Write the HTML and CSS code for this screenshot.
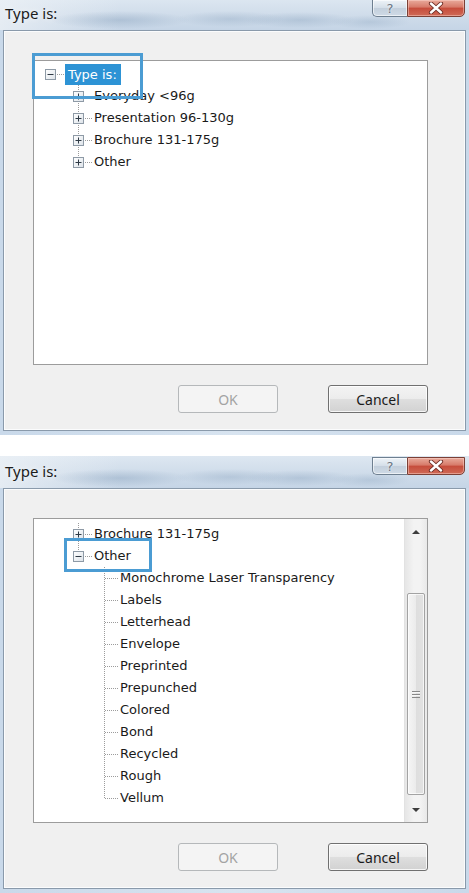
FILE: index.html
```html
<!DOCTYPE html>
<html lang="en">
<head>
<meta charset="utf-8">
<title>Type is:</title>
<link rel="stylesheet" href="styles.css">
</head>
<body>
<svg width="0" height="0" class="defs" aria-hidden="true">
  <defs>
    <linearGradient id="boxfill" x1="0" y1="0" x2="1" y2="1">
      <stop offset="0" stop-color="#ffffff"/>
      <stop offset="1" stop-color="#dde3e9"/>
    </linearGradient>
    <symbol id="minus" viewBox="0 0 11 11">
      <rect x=".5" y=".5" width="10" height="10" fill="url(#boxfill)" stroke="#8e9aa6"/>
      <path d="M2.5 5.5H8.5" stroke="#2f3a45"/>
    </symbol>
    <symbol id="plus" viewBox="0 0 11 11">
      <rect x=".5" y=".5" width="10" height="10" fill="url(#boxfill)" stroke="#8e9aa6"/>
      <path d="M2.5 5.5H8.5M5.5 2.5V8.5" stroke="#2f3a45"/>
    </symbol>
    <symbol id="closex" viewBox="0 0 16 12">
      <path d="M3 1.5 L13 10.5 M13 1.5 L3 10.5" stroke="#6a2a22" stroke-width="4.2" stroke-linecap="round"/>
      <path d="M3 1.5 L13 10.5 M13 1.5 L3 10.5" stroke="#ffffff" stroke-width="2.4" stroke-linecap="round"/>
    </symbol>
  </defs>
</svg>

<div class="window first">
  <div class="titlebar">
    <span class="title">Type is:</span>
    <div class="caption">
      <span class="cap help">?</span>
      <span class="cap close"><svg width="16" height="12"><use href="#closex"/></svg></span>
    </div>
  </div>
  <div class="client">
    <div class="tree">
      <div class="tree-content pad-a">
        <ul class="grp g0">
          <li>
            <div class="row r0"><span class="exp"><svg width="11" height="11"><use href="#minus"/></svg></span><span class="label sel">Type is:</span></div>
            <ul class="grp g1">
              <li><div class="row r1"><span class="exp"><svg width="11" height="11"><use href="#plus"/></svg></span><span class="label">Everyday &lt;96g</span></div></li>
              <li><div class="row r1"><span class="exp"><svg width="11" height="11"><use href="#plus"/></svg></span><span class="label">Presentation 96-130g</span></div></li>
              <li><div class="row r1"><span class="exp"><svg width="11" height="11"><use href="#plus"/></svg></span><span class="label">Brochure 131-175g</span></div></li>
              <li><div class="row r1"><span class="exp"><svg width="11" height="11"><use href="#plus"/></svg></span><span class="label">Other</span></div></li>
            </ul>
          </li>
        </ul>
      </div>
    </div>
    <div class="actions">
      <button class="btn" disabled>OK</button>
      <button class="btn">Cancel</button>
    </div>
    <div class="callout callout-a"></div>
  </div>
</div>

<div class="window second">
  <div class="titlebar">
    <span class="title">Type is:</span>
    <div class="caption">
      <span class="cap help">?</span>
      <span class="cap close"><svg width="16" height="12"><use href="#closex"/></svg></span>
    </div>
  </div>
  <div class="client">
    <div class="tree">
      <div class="tree-content pad-b">
        <ul class="grp g1">
          <li><div class="row r1"><span class="exp"><svg width="11" height="11"><use href="#plus"/></svg></span><span class="label">Brochure 131-175g</span></div></li>
          <li>
            <div class="row r1"><span class="exp"><svg width="11" height="11"><use href="#minus"/></svg></span><span class="label">Other</span></div>
            <ul class="grp g2">
              <li><div class="row r2"><span class="exp"></span><span class="label">Monochrome Laser Transparency</span></div></li>
              <li><div class="row r2"><span class="exp"></span><span class="label">Labels</span></div></li>
              <li><div class="row r2"><span class="exp"></span><span class="label">Letterhead</span></div></li>
              <li><div class="row r2"><span class="exp"></span><span class="label">Envelope</span></div></li>
              <li><div class="row r2"><span class="exp"></span><span class="label">Preprinted</span></div></li>
              <li><div class="row r2"><span class="exp"></span><span class="label">Prepunched</span></div></li>
              <li><div class="row r2"><span class="exp"></span><span class="label">Colored</span></div></li>
              <li><div class="row r2"><span class="exp"></span><span class="label">Bond</span></div></li>
              <li><div class="row r2"><span class="exp"></span><span class="label">Recycled</span></div></li>
              <li><div class="row r2"><span class="exp"></span><span class="label">Rough</span></div></li>
              <li><div class="row r2"><span class="exp"></span><span class="label">Vellum</span></div></li>
            </ul>
          </li>
        </ul>
      </div>
      <div class="scrollbar">
        <div class="sb-btn"><span class="arrow up"></span></div>
        <div class="sb-track"><div class="thumb"><span class="grip"></span></div></div>
        <div class="sb-btn"><span class="arrow down"></span></div>
      </div>
    </div>
    <div class="actions">
      <button class="btn" disabled>OK</button>
      <button class="btn">Cancel</button>
    </div>
    <div class="callout callout-b"></div>
  </div>
</div>
</body>
</html>
```

FILE: styles.css
```css
* { box-sizing: border-box; }

html, body {
  margin: 0;
  padding: 0;
  background: #ffffff;
  overflow: hidden;
}

body {
  width: 469px;
  height: 893px;
  font-family: "DejaVu Sans", sans-serif;
}

.defs { position: absolute; width: 0; height: 0; }

.window {
  width: 469px;
  padding: 0 3px 4px 3px;
  background: linear-gradient(to right, #c9d9ea, #d8e4f0 50%, #c9d9ea);
}

.window.first { margin-top: -2px; }
.window.second { margin-top: 21px; }

.titlebar {
  height: 32px;
  margin: 0 -3px;
  padding: 0 4px 0 5px;
  display: flex;
  align-items: flex-start;
  justify-content: space-between;
  background:
    radial-gradient(ellipse 70px 9px at 120px 22px, rgba(120,148,178,.35), transparent),
    radial-gradient(ellipse 55px 8px at 230px 21px, rgba(120,148,178,.28), transparent),
    radial-gradient(ellipse 55px 8px at 300px 22px, rgba(120,148,178,.3), transparent),
    radial-gradient(ellipse 40px 7px at 370px 24px, rgba(120,148,178,.25), transparent),
    linear-gradient(to right, rgba(236,241,246,.8), rgba(236,241,246,0) 120px),
    linear-gradient(#dde7f1, #cfdcea 55%, #c5d5e6);
}

.title {
  font-family: "Noto Sans", sans-serif;
  font-size: 15px;
  color: #1c1c1c;
  line-height: 20px;
  margin-top: 5px;
  text-shadow: 0 0 6px rgba(255,255,255,.9);
}

.caption {
  display: flex;
  margin-top: 1px;
}

.cap {
  height: 18px;
  display: flex;
  align-items: center;
  justify-content: center;
  border: 1px solid #6e7f90;
}

.cap.help {
  width: 35px;
  border-right: none;
  border-radius: 0 0 0 5px;
  background: linear-gradient(#eef3f8, #d4dee8 50%, #c3cfdc 51%, #cfdae6);
  font-family: "DejaVu Sans", sans-serif;
  font-size: 13px;
  color: #6a7582;
  text-shadow: 0 0 2px #fff;
  box-shadow: inset 0 0 0 1px rgba(255,255,255,.6);
}

.cap.close {
  width: 58px;
  border-color: #7b4036;
  border-radius: 0 0 5px 0;
  background: linear-gradient(#e9aa9b, #d77a69 45%, #c64c3b 50%, #cf6a57);
  box-shadow: inset 0 0 0 1px rgba(255,220,210,.45);
}

.client {
  position: relative;
  height: 401px;
  padding: 29px 0 0 29px;
  background: #f0f0f0;
  border: 1px solid #8a9aab;
  box-shadow: inset 0 0 0 1px #fbfcfd;
}

.tree {
  width: 395px;
  height: 305px;
  background: #ffffff;
  border: 1px solid #9c9c9c;
  display: flex;
  overflow: hidden;
}

.tree-content {
  flex: 1;
  overflow: hidden;
}

.pad-a { padding-top: 2px; }
.pad-b { padding-top: 4px; }

.grp {
  list-style: none;
  margin: 0;
  padding: 0;
}

.g1 > li {
  background: repeating-linear-gradient(to bottom, #9c9c9c 0 1px, transparent 1px 2px) no-repeat 44px 0 / 1px 100%;
}
.g1 > li:last-child { background-size: 1px 11px; }

.g2 > li {
  background: repeating-linear-gradient(to bottom, #9c9c9c 0 1px, transparent 1px 2px) no-repeat 70px 0 / 1px 100%;
}
.g2 > li:last-child { background-size: 1px 11px; }

.row {
  height: 22px;
  display: flex;
  align-items: center;
  font-size: 13px;
  color: #1a1a1a;
  white-space: nowrap;
}

.exp {
  height: 22px;
  display: flex;
  align-items: center;
  flex: none;
}

.exp svg { display: block; }

.r0 { padding-left: 11px; }
.r1 { padding-left: 39px; }
.r2 { padding-left: 70px; }

.r0 .exp, .r1 .exp {
  width: 20px;
  background: repeating-linear-gradient(to right, #9c9c9c 0 1px, transparent 1px 2px) no-repeat 12px 50% / 7px 1px;
}

.r2 .exp {
  width: 15px;
  background: repeating-linear-gradient(to right, #9c9c9c 0 1px, transparent 1px 2px) no-repeat 1px 50% / 13px 1px;
}

.label {
  line-height: 20px;
  padding: 0 1px;
}

.label.sel {
  background: #2d93d5;
  color: #ffffff;
  padding: 0 4px 0 3px;
  line-height: 21px;
}

.scrollbar {
  width: 23px;
  flex: none;
  display: flex;
  flex-direction: column;
  background: linear-gradient(to right, #e6e6e6, #f3f3f3 40%, #f3f3f3 70%, #e9e9e9);
  border-left: 1px solid #e2e2e2;
}

.sb-btn {
  height: 25px;
  display: flex;
  align-items: center;
  justify-content: center;
}

.arrow {
  width: 0;
  height: 0;
  border-left: 4px solid transparent;
  border-right: 4px solid transparent;
}
.arrow.up { border-bottom: 4px solid #3d3d3d; }
.arrow.down { border-top: 4px solid #3d3d3d; }

.sb-track {
  flex: 1;
  padding: 49px 2px 2px 2px;
}

.thumb {
  height: 202px;
  border: 1px solid #a3a3a3;
  border-radius: 2px;
  background: linear-gradient(to right, #f5f5f5, #ebebeb 50%, #dedede 51%, #e2e2e2);
  box-shadow: inset 0 0 0 1px rgba(255,255,255,.7);
  display: flex;
  align-items: center;
  justify-content: center;
}

.grip {
  width: 8px;
  height: 7px;
  background: repeating-linear-gradient(to bottom, #8a8a8a 0 1px, #f8f8f8 1px 2px, transparent 2px 3px);
}

.actions {
  width: 395px;
  margin-top: 20px;
  display: flex;
  justify-content: flex-end;
  gap: 50px;
}

.btn {
  width: 100px;
  height: 28px;
  padding: 0;
  font-family: "Noto Sans", sans-serif;
  font-size: 14px;
  color: #1a1a1a;
  border: 1px solid #707070;
  border-radius: 3px;
  background: linear-gradient(#f3f3f3, #ececec 48%, #dedede 52%, #d2d2d2);
  box-shadow: inset 0 0 0 1px rgba(255,255,255,.8);
}

.btn:disabled {
  color: #a3a3a3;
  border-color: #b5b8ba;
  background: #f4f4f4;
  box-shadow: none;
}

.callout {
  position: absolute;
  border: 3px solid #4b9cd3;
  pointer-events: none;
}

.callout-a {
  left: 28px;
  top: 22px;
  width: 111px;
  height: 46px;
}

.callout-b {
  left: 60px;
  top: 49px;
  width: 88px;
  height: 34px;
}
```
